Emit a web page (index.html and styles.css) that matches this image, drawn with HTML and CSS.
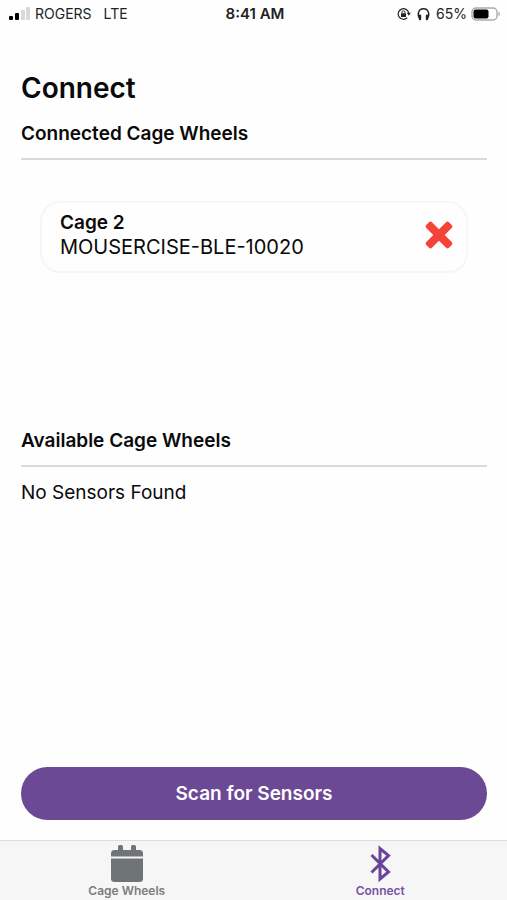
FILE: index.html
```html
<!DOCTYPE html>
<html lang="en">

<head>
    <meta charset="UTF-8">
    <meta name="viewport" content="width=device-width, initial-scale=1">
    <title>Connect</title>
    <link rel="stylesheet" href="styles.css">
</head>

<body>
    <div class="status">
        <div class="carrier">
            <svg width="22" height="14" viewBox="0 0 22 14">
                <rect x="0" y="9" width="4" height="4" rx="1" fill="#000" />
                <rect x="6" y="6" width="4" height="7" rx="1" fill="#000" />
                <rect x="12" y="3" width="4" height="10" rx="1" fill="#d9d9d9" />
                <rect x="17" y="0" width="4" height="13" rx="1" fill="#d9d9d9" />
            </svg>
            <span>ROGERS</span>
            <span class="network">LTE</span>
        </div>
        <div class="clock">8:41 AM</div>
        <div class="battery">
            <svg width="14" height="14" viewBox="0 0 14 14" fill="none" stroke="#222">
                <path d="M10.2 10.8A5.3 5.3 0 1 1 11.7 6" stroke-width="1.2" />
                <path d="M9.8 5.8h4l-2 3z" fill="#222" stroke="none" />
                <rect x="4" y="6.2" width="5" height="3.8" rx=".5" fill="#222" stroke="none" />
                <path d="M5 6.5V5.3a1.5 1.5 0 0 1 3 0v1.2" />
            </svg>
            <svg class="headphones" width="13" height="14" viewBox="0 0 13 14" fill="none" stroke="#222">
                <path d="M2.5 11C.4 8.6.7 1.7 6.5 1.7S12.6 8.6 10.5 11" stroke-width="1.4" />
                <path d="M3 8.8v3.2M10 8.8v3.2" stroke-width="2.4" stroke-linecap="round" />
            </svg>
            <span>65%</span>
            <svg width="30" height="14" viewBox="0 0 30 14">
                <rect x="1" y="1" width="25" height="12" rx="4" fill="#fff" stroke="#aaa" stroke-width="1.4" />
                <rect x="2.5" y="2.5" width="15" height="9" rx="2" fill="#000" />
                <path d="M27.5 4.5q3 2.5 0 5z" fill="#aaa" />
            </svg>
        </div>
    </div>

    <main>
        <h1>Connect</h1>

        <section class="connected">
            <h2>Connected Cage Wheels</h2>
            <div class="card">
                <div>
                    <h3>Cage 2</h3>
                    <p>MOUSERCISE-BLE-10020</p>
                </div>
                <button class="remove" aria-label="Disconnect Cage 2">
                    <svg width="28" height="28" viewBox="0 0 28 28" fill="#f64337">
                        <rect x="-2" y="10" width="32" height="8" rx="2" transform="rotate(45 14 14)" />
                        <rect x="-2" y="10" width="32" height="8" rx="2" transform="rotate(-45 14 14)" />
                    </svg>
                </button>
            </div>
        </section>

        <section class="available">
            <h2>Available Cage Wheels</h2>
            <p>No Sensors Found</p>
        </section>

        <button class="scan">Scan for Sensors</button>
    </main>

    <nav class="tabs">
        <a href="#wheels">
            <svg width="34" height="38" viewBox="0 0 34 38" fill="#6f7577">
                <path d="M1 11.5V8.5Q1 5 4.500 5H8V2Q8 0 9.500 0h2q1.500 0 1.500 2v3h8V2Q21 0 22.500 0h2Q26 0 26 2v3h3.500Q33 5 33 8.500v3z" />
                <path d="M1 13.500h32V33.500q0 3.500-3.500 3.500h-25Q1 37 1 33.500z" />
            </svg>
            <span>Cage Wheels</span>
        </a>
        <a href="#connect" class="active">
            <svg width="34" height="38" viewBox="0 0 34 38" fill="none" stroke="#68459a" stroke-width="3">
                <path d="M8.500 10l17 17-8.500 7V3.500l8.500 7L8.500 27.500" />
            </svg>
            <span>Connect</span>
        </a>
    </nav>
</body>

</html>
```
FILE: styles.css
```css
* {
    box-sizing: border-box;
    margin: 0;
    padding: 0;
}

body {
    display: flex;
    flex-direction: column;
    min-height: 100vh;
    background: #fefefe;
    color: #0a0a0a;
    font-family: Inter, "Liberation Sans", sans-serif;
    font-size: 19px;
    line-height: 24px;
}

button {
    border: none;
    background: none;
    font-family: inherit;
    cursor: pointer;
}

svg {
    display: block;
    overflow: visible;
}

/* status bar */
.status {
    display: grid;
    grid-template-columns: 1fr auto 1fr;
    align-items: center;
    height: 28px;
    padding: 0 6px 0 9px;
    font-size: 14px;
    color: #222;
}

.carrier,
.battery {
    display: flex;
    align-items: center;
    gap: 4px;
}

.network {
    margin-left: 8px;
}

.clock {
    font-size: 15px;
    font-weight: 600;
}

.battery {
    justify-content: flex-end;
}

.headphones {
    margin: 0 2px;
}

/* content */
main {
    display: flex;
    flex: 1;
    flex-direction: column;
    padding: 40px 20px 20px;
    padding-left: 21px;
}

h1 {
    margin-bottom: 13px;
    font-size: 28px;
    font-weight: 600;
    line-height: 40px;
}

h2 {
    padding-bottom: 11px;
    border-bottom: 2px solid #d9d9d9;
    font-size: 19px;
    font-weight: 600;
    line-height: 26px;
}

.connected {
    min-height: 307px;
}

.card {
    display: flex;
    align-items: center;
    justify-content: space-between;
    margin: 41px 19px;
    padding: 8px 13px 12px 18px;
    border: 2px solid #f6f6f6;
    border-radius: 20px;
}

.card h3 {
    font-size: 19px;
    font-weight: 600;
}

.card p {
    font-size: 20px;
}

.available {
    flex: 1;
}

.available p {
    margin-top: 14px;
}

.scan {
    height: 53px;
    border-radius: 27px;
    background: #6c4995;
    color: #fff;
    font-size: 19px;
    font-weight: 600;
}

/* bottom tabs */
.tabs {
    display: flex;
    height: 60px;
    border-top: 1px solid #dcdcdc;
    background: #f6f6f6;
}

.tabs a {
    display: flex;
    flex: 1;
    flex-direction: column;
    align-items: center;
    padding-top: 4px;
    color: #7d7d80;
    font-size: 12px;
    font-weight: 600;
    line-height: 16px;
    text-decoration: none;
}

.tabs .active {
    color: #7653a2;
}
```
